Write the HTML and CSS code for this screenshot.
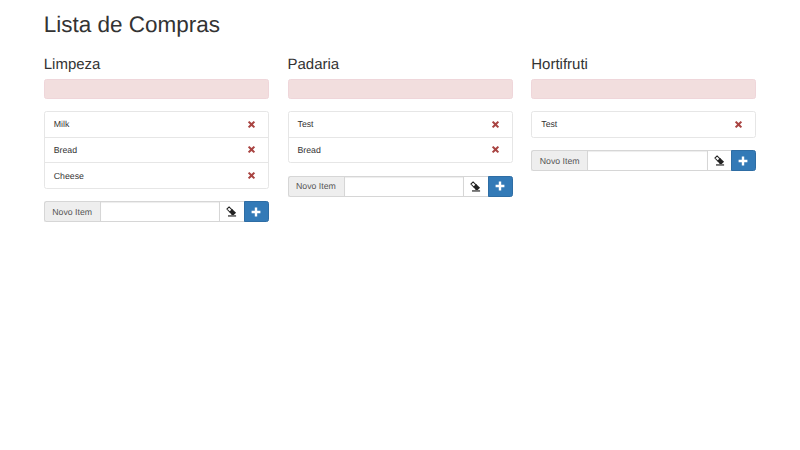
FILE: index.html
```html
<!DOCTYPE html>
<html lang="pt">
<head>
<meta charset="utf-8">
<title>Lista de Compras</title>
<link rel="stylesheet" href="styles.css">
</head>
<body>
<svg class="defs" width="0" height="0" aria-hidden="true">
  <symbol id="i-x" viewBox="0 0 10 10"><path d="M2.6 1 5 3.4 7.4 1 9 2.6 6.6 5 9 7.4 7.4 9 5 6.6 2.6 9 1 7.4 3.4 5 1 2.6z"/></symbol>
  <symbol id="i-plus" viewBox="0 0 10 10"><path d="M3.8 0.6h2.4v3.2h3.2v2.4H6.2v3.2H3.8V6.2H0.6V3.8h3.2z"/></symbol>
  <symbol id="i-eraser" viewBox="0 0 12 12"><path d="M3.4 1 1 3.4 4.4 6.8 6.8 4.4z" fill="none" stroke="currentColor" stroke-width="1.1"/><path d="M6.6 3.4 11 7.4 8.4 9.8H6.2L3.6 6.4z"/><path d="M2.2 10.2h8.8v1.3H2.2z"/></symbol>
</svg>
<div class="page">
  <h1 class="title">Lista de Compras</h1>
  <div class="columns">
    <section class="col">
      <h2 class="col-title">Limpeza</h2>
      <div class="alert"></div>
      <ul class="items">
        <li class="item"><span>Milk</span><svg class="remove"><use href="#i-x"/></svg></li>
        <li class="item"><span>Bread</span><svg class="remove"><use href="#i-x"/></svg></li>
        <li class="item"><span>Cheese</span><svg class="remove"><use href="#i-x"/></svg></li>
      </ul>
      <div class="add"><span class="add-label">Novo Item</span><input class="add-input" type="text"><button class="btn-clear"><svg class="eraser"><use href="#i-eraser"/></svg></button><button class="btn-add"><svg class="plus"><use href="#i-plus"/></svg></button></div>
    </section>
    <section class="col">
      <h2 class="col-title">Padaria</h2>
      <div class="alert"></div>
      <ul class="items">
        <li class="item"><span>Test</span><svg class="remove"><use href="#i-x"/></svg></li>
        <li class="item"><span>Bread</span><svg class="remove"><use href="#i-x"/></svg></li>
      </ul>
      <div class="add"><span class="add-label">Novo Item</span><input class="add-input" type="text"><button class="btn-clear"><svg class="eraser"><use href="#i-eraser"/></svg></button><button class="btn-add"><svg class="plus"><use href="#i-plus"/></svg></button></div>
    </section>
    <section class="col">
      <h2 class="col-title">Hortifruti</h2>
      <div class="alert"></div>
      <ul class="items">
        <li class="item"><span>Test</span><svg class="remove"><use href="#i-x"/></svg></li>
      </ul>
      <div class="add"><span class="add-label">Novo Item</span><input class="add-input" type="text"><button class="btn-clear"><svg class="eraser"><use href="#i-eraser"/></svg></button><button class="btn-add"><svg class="plus"><use href="#i-plus"/></svg></button></div>
    </section>
  </div>
</div>
</body>
</html>
```
FILE: styles.css
```css
* { box-sizing: border-box; }
html, body { margin: 0; padding: 0; background: #fff; }
body { font-family: "Liberation Sans", Arial, sans-serif; color: #333; font-size: 8.75px; text-rendering: geometricPrecision; }
.defs { position: absolute; }
.page { padding: 12.5px 43.75px 0; }
.title { margin: 0; font-size: 22.5px; font-weight: 400; line-height: 24.75px; }
.columns { display: grid; grid-template-columns: repeat(3, minmax(0, 1fr)); column-gap: 18.75px; margin-top: 18.75px; align-items: start; }
.col-title { margin: 0; font-size: 15px; font-weight: 400; line-height: 18.5px; }
.alert { height: 20px; margin-top: 4.25px; background: #f2dede; border: 1px solid #efd6da; border-radius: 2.5px; }
.items { list-style: none; margin: 12.5px 0 0; padding: 0; border: 1px solid #e6e6e6; border-radius: 2.5px; }
.item { display: flex; justify-content: space-between; align-items: center; height: 25.625px; padding: 0 12px 0 9px; border-top: 1px solid #e6e6e6; }
.item:first-child { border-top: 0; height: 24.4px; }
.remove { width: 9px; height: 9px; fill: #a94442; }
.add { display: flex; height: 21.25px; margin-top: 12.25px; }
.add-label { display: flex; align-items: center; flex: none; padding: 0 7.5px; width: 56px; background: #eee; border: 1px solid #d6d6d6; border-right: 0; border-radius: 2.5px 0 0 2.5px; color: #555; white-space: nowrap; }
.add-input { flex: 1; min-width: 0; height: 100%; padding: 0; border: 1px solid #d6d6d6; background: #fff; box-shadow: inset 0 1px 1px rgba(0,0,0,.075); }
.btn-clear { display: flex; align-items: center; justify-content: center; flex: none; width: 25.5px; height: 100%; margin-left: -1px; padding: 0 1px 0 0; background: #fff; border: 1px solid #d6d6d6; color: #222; }
.btn-add { display: flex; align-items: center; justify-content: center; flex: none; width: 25px; height: 100%; margin-left: -1px; padding: 0 1px 0 0; background: #337ab7; border: 1px solid #2e6da4; border-radius: 0 2.5px 2.5px 0; }
.eraser { width: 11px; height: 11px; fill: #222; }
.plus { width: 10px; height: 10px; fill: #fff; }
```
